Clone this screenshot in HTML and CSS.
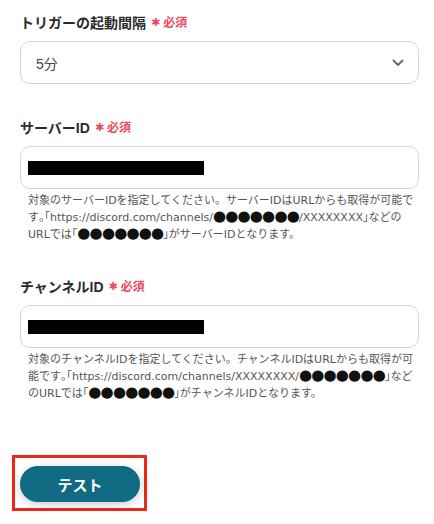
FILE: index.html
```html
<!DOCTYPE html>
<html lang="ja">
<head>
<meta charset="utf-8">
<link rel="stylesheet" href="styles.css">
</head>
<body>
<div class="form">
  <div class="field first">
    <div class="label">トリガーの起動間隔<span class="req"><span class="star">✱</span>必須</span></div>
    <div class="box select">
      <span class="value">5分</span>
      <svg class="chev" width="12" height="8" viewBox="0 0 12 8"><path d="M1.5 1.5 L6 6 L10.5 1.5" fill="none" stroke="#666" stroke-width="1.8" stroke-linecap="round" stroke-linejoin="round"/></svg>
    </div>
  </div>
  <div class="field">
    <div class="label">サーバーID<span class="req"><span class="star">✱</span>必須</span></div>
    <div class="box input"><span class="redact"></span></div>
    <p class="help">対象のサーバーIDを指定してください。サーバーIDはURLからも取得が可能です<span class="pn">。「</span>https://discord.com/channels/<span class="dots">●●●●●●●</span>/XXXXXXXX<span class="pn">」</span>などのURLでは<span class="pn">「</span><span class="dots">●●●●●●●</span><span class="pn">」</span>がサーバーIDとなります。</p>
  </div>
  <div class="field">
    <div class="label">チャンネルID<span class="req"><span class="star">✱</span>必須</span></div>
    <div class="box input"><span class="redact"></span></div>
    <p class="help">対象のチャンネルIDを指定してください。チャンネルIDはURLからも取得が可能です<span class="pn">。「</span>https://discord.com/channels/XXXXXXXX/<span class="dots">●●●●●●●</span><span class="pn">」</span>などのURLでは<span class="pn">「</span><span class="dots">●●●●●●●</span><span class="pn">」</span>がチャンネルIDとなります。</p>
  </div>
  <div class="actions">
    <div class="highlight"><button class="btn">テスト</button></div>
  </div>
</div>
</body>
</html>
```

FILE: styles.css
```css
html, body {
  margin: 0;
  padding: 0;
  background: #fff;
}
body {
  font-family: "Liberation Sans", "Noto Sans CJK JP", sans-serif;
  color: #333;
}
.form {
  padding: 0 15px 0 20px;
}
.field {
  padding-top: 34px;
}
.field.first {
  padding-top: 13px;
}
.label {
  font-size: 14px;
  line-height: 20px;
  font-weight: 700;
  color: #2b2b2b;
  margin-bottom: 8px;
  display: flex;
  align-items: center;
}
.req {
  color: #eb4a5c;
  font-size: 12px;
  font-weight: 700;
  margin-left: 5px;
  display: flex;
  align-items: center;
}
.star {
  font-family: "DejaVu Sans", sans-serif;
  font-size: 11px;
  margin-right: 3px;
}
.box {
  box-sizing: border-box;
  height: 43px;
  border: 1px solid #d3d7dd;
  border-radius: 10px;
  display: flex;
  align-items: center;
}
.select {
  padding: 0 14px 0 15px;
  justify-content: space-between;
}
.value {
  font-size: 14px;
  color: #444;
}
.input {
  padding-left: 7px;
}
.redact {
  display: block;
  width: 176px;
  height: 14px;
  background: #000;
}
.help {
  margin: 3px -3px 0 0;
  padding-left: 8px;
  font-family: "DejaVu Sans", "Noto Sans CJK JP", sans-serif;
  font-size: 11px;
  line-height: 17px;
  color: #555;
}
.pn {
  font-family: "Noto Sans CJK JP", sans-serif;
  font-feature-settings: "halt";
  line-height: 0;
}
.dots {
  font-size: 15px;
  line-height: 0;
  color: #111;
  letter-spacing: -0.8px;
}
.actions {
  padding-top: 53px;
  margin-left: -8px;
}
.highlight {
  display: inline-block;
  border: 3px solid #f0261a;
  padding: 8px 4px 6px 5px;
}
.btn {
  display: block;
  width: 120px;
  height: 36px;
  border: none;
  border-radius: 18px;
  background: #0f6a82;
  color: #fff;
  font-family: "Noto Sans CJK JP", sans-serif;
  font-size: 15px;
  font-weight: 700;
  box-shadow: 0 2px 8px rgba(0,0,0,0.22);
}
```
